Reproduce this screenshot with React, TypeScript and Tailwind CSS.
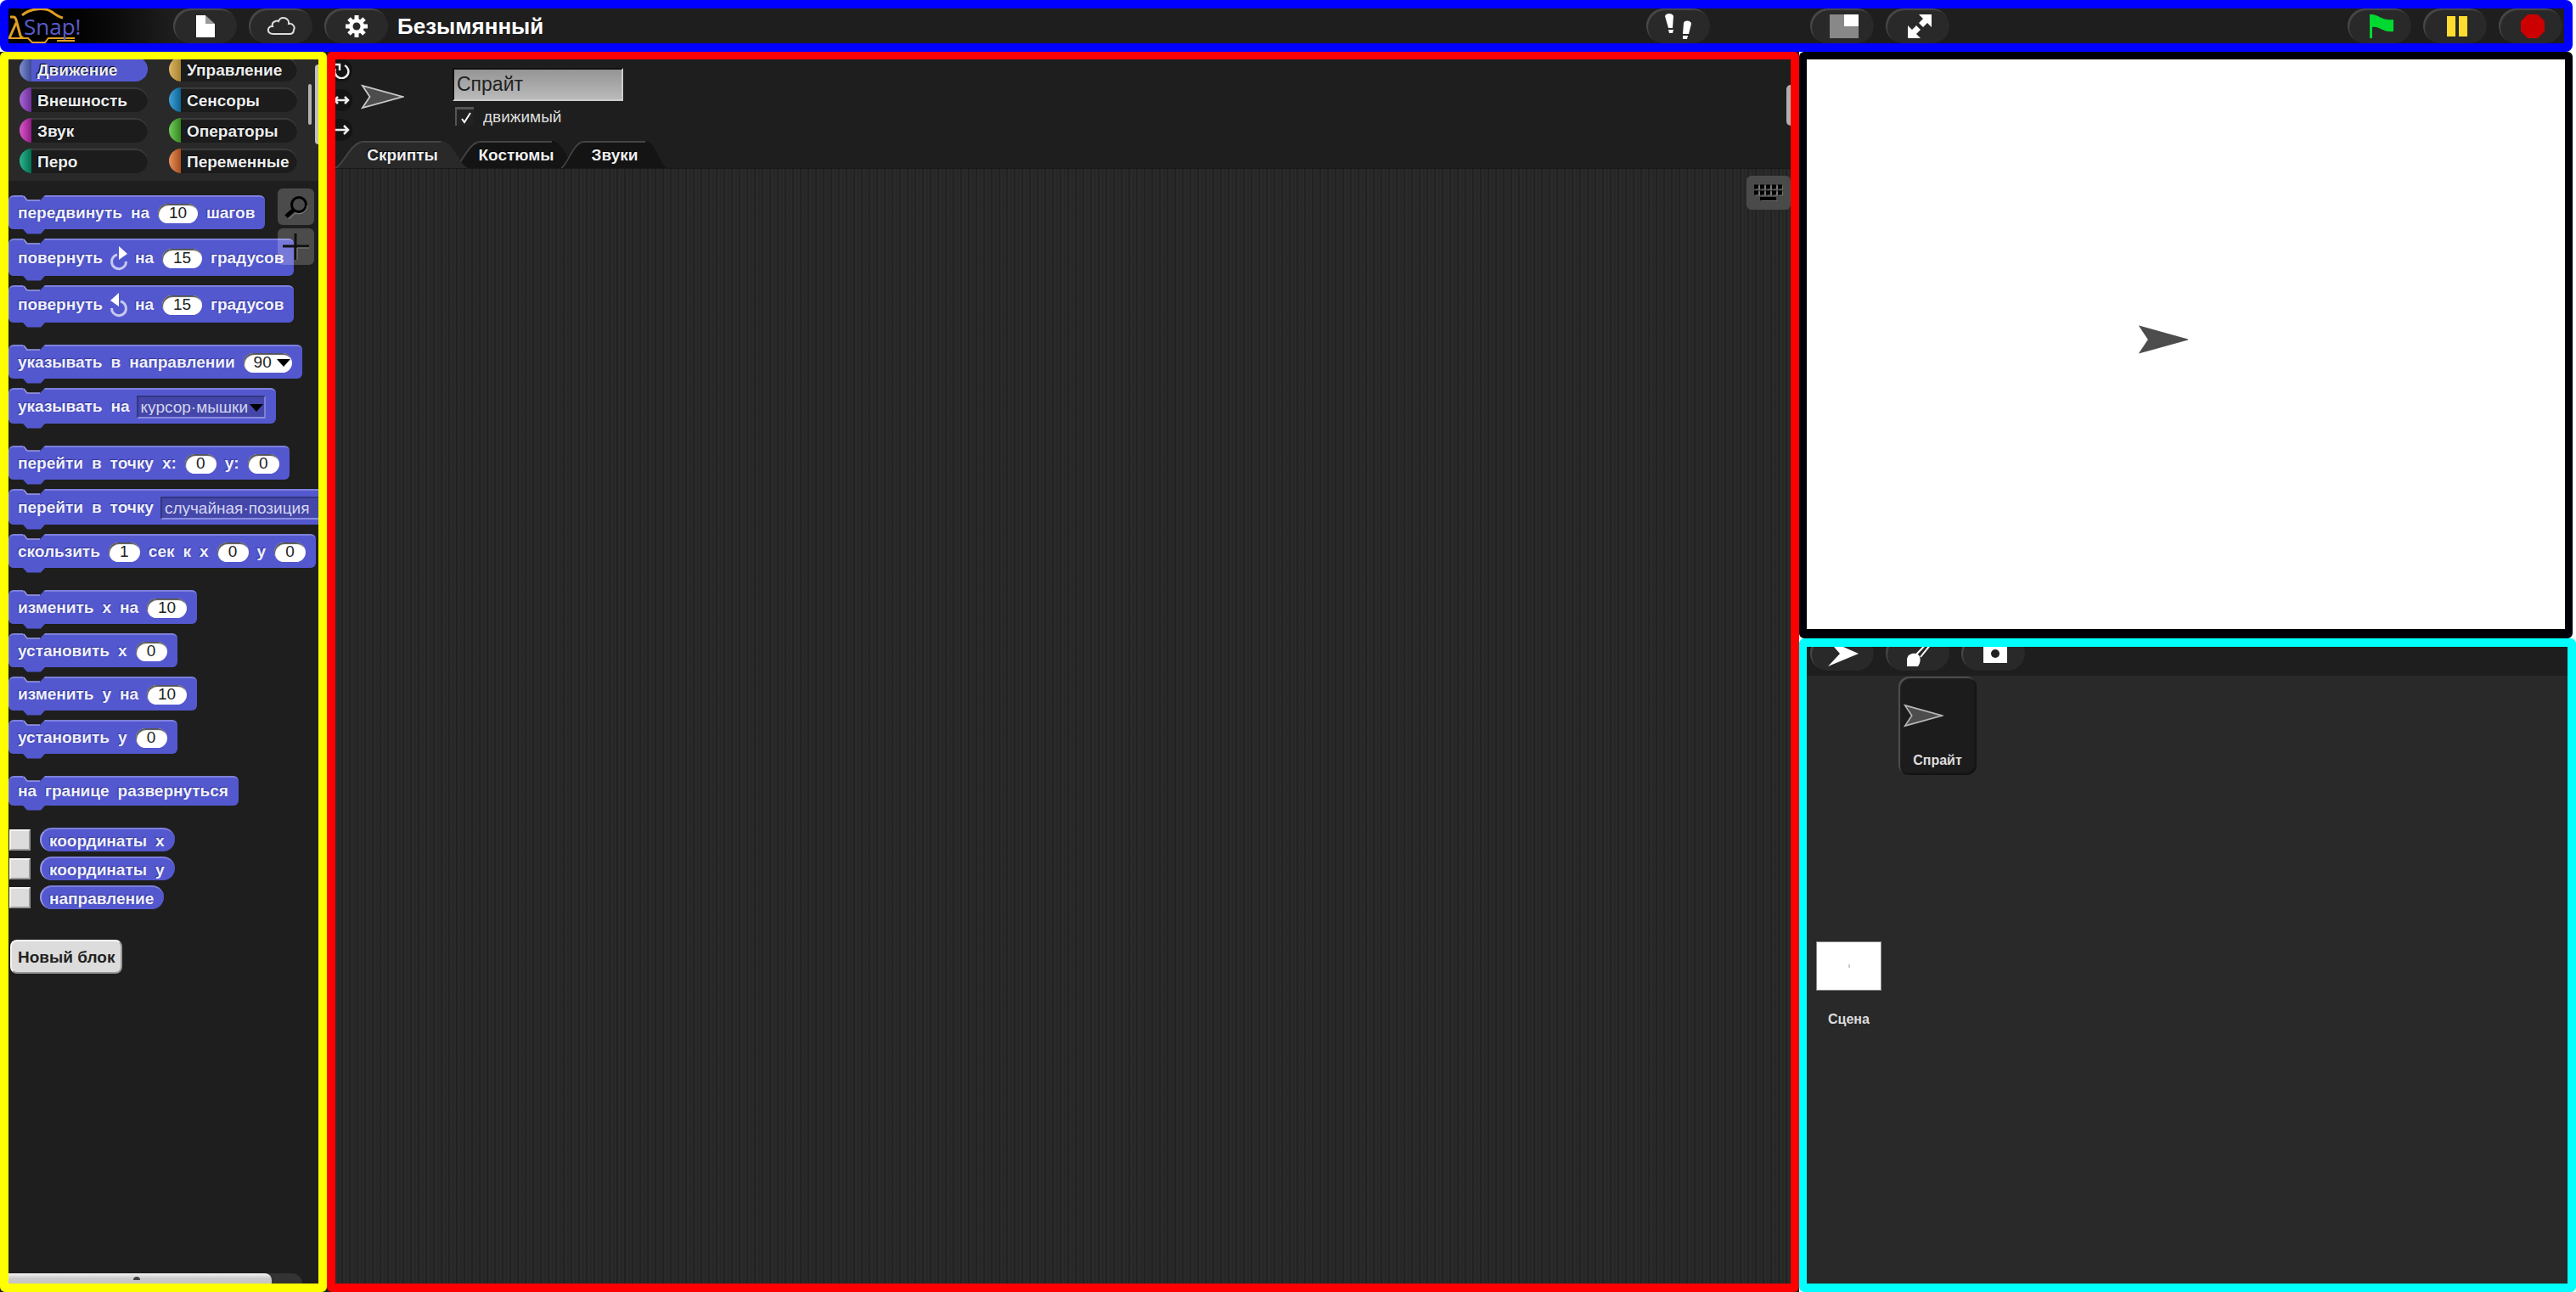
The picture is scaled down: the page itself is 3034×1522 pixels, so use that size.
import React from "react";

type Part =
  | { t: "w"; v: string }
  | { t: "n"; v: string }
  | { t: "nd"; v: string }
  | { t: "sel"; v: string; wide?: boolean }
  | { t: "cw" }
  | { t: "ccw" };

const w = (s: string): Part[] => s.split(" ").map((v) => ({ t: "w", v }));
const n = (v: string): Part => ({ t: "n", v });

const groups: { h: string; parts: Part[] }[][] = [
  [
    { h: "h-10", parts: [...w("передвинуть на"), n("10"), ...w("шагов")] },
    { h: "h-11", parts: [...w("повернуть"), { t: "cw" }, ...w("на"), n("15"), ...w("градусов")] },
    { h: "h-11", parts: [...w("повернуть"), { t: "ccw" }, ...w("на"), n("15"), ...w("градусов")] },
  ],
  [
    { h: "h-10", parts: [...w("указывать в направлении"), { t: "nd", v: "90" }] },
    { h: "h-[42px]", parts: [...w("указывать на"), { t: "sel", v: "курсор·мышки" }] },
  ],
  [
    { h: "h-10", parts: [...w("перейти в точку x:"), n("0"), ...w("y:"), n("0")] },
    { h: "h-[42px]", parts: [...w("перейти в точку"), { t: "sel", v: "случайная·позиция", wide: true }] },
    { h: "h-10", parts: [...w("скользить"), n("1"), ...w("сек к x"), n("0"), ...w("y"), n("0")] },
  ],
  [
    { h: "h-10", parts: [...w("изменить x на"), n("10")] },
    { h: "h-10", parts: [...w("установить x"), n("0")] },
    { h: "h-10", parts: [...w("изменить y на"), n("10")] },
    { h: "h-10", parts: [...w("установить y"), n("0")] },
  ],
  [{ h: "h-[35px]", parts: w("на границе развернуться") }],
];

const categories = [
  { name: "Движение", tab: "from-[#7f8fce] to-[#3d4a94]", active: true },
  { name: "Управление", tab: "from-[#dcb566] to-[#a8842f]" },
  { name: "Внешность", tab: "from-[#a866d6] to-[#6d2e99]" },
  { name: "Сенсоры", tab: "from-[#3fa3d8] to-[#0a6594]" },
  { name: "Звук", tab: "from-[#dd58cc] to-[#8f1a85]" },
  { name: "Операторы", tab: "from-[#72cc5c] to-[#34881f]" },
  { name: "Перо", tab: "from-[#2bb791] to-[#007050]" },
  { name: "Переменные", tab: "from-[#e8925c] to-[#a84f1c]" },
];

function TurnIcon({ flip }: { flip?: boolean }) {
  return (
    <svg viewBox="0 0 22 30" className={flip ? "-mx-0.5 h-[30px] w-[22px] shrink-0 -scale-x-100" : "-mx-0.5 h-[30px] w-[22px] shrink-0"} aria-hidden="true">
      <path d="M9 11A8.500 8.500 0 1 0 19.500 19" fill="none" stroke="#c8c9f0" strokeWidth="3" />
      <path d="M11 1L21 10L11 17Z" fill="#fff" />
    </svg>
  );
}

function NumberSlot({ value, label }: { value: string; label: string }) {
  return (
    <input
      aria-label={label}
      defaultValue={value}
      className={
        (value.length > 1 ? "w-[47px]" : "w-[37px]") +
        " h-[23px] shrink-0 rounded-full bg-white p-0 text-center text-[19px] leading-none font-normal text-[#222] shadow-[inset_1px_2px_1px_#555] [text-shadow:none]"
      }
    />
  );
}

function BlockPart({ part, label }: { part: Part; label: string }) {
  switch (part.t) {
    case "w":
      return <span>{part.v}</span>;
    case "n":
      return <NumberSlot value={part.v} label={label} />;
    case "nd":
      return (
        <span className="flex h-[23px] w-[57px] shrink-0 items-center rounded-full bg-white pl-3 shadow-[inset_1px_2px_1px_#555]">
          <input aria-label={label} defaultValue={part.v} className="w-6 bg-transparent p-0 text-[19px] leading-none font-normal text-[#222] [text-shadow:none]" />
          <button aria-label="Выбрать направление" className="ml-[3px]">
            <svg viewBox="0 0 16 9" className="h-[9px] w-4">
              <path d="M0 0H16L8 9Z" fill="#000" />
            </svg>
          </button>
        </span>
      );
    case "sel":
      return (
        <span className="relative -ml-0.5 shrink-0">
          <select
            aria-label={label}
            className={
              (part.wide ? "w-[206px]" : "w-[152px]") +
              " block h-[27px] appearance-none border-2 border-t-[#33367f] border-r-[#7b7edc] border-b-[#8a8de0] border-l-[#33367f] bg-[#4447a8] px-[3px] text-[19px] leading-none font-normal text-[#d4d5f2]"
            }
          >
            <option>{part.v}</option>
          </select>
          <svg viewBox="0 0 16 9" className="pointer-events-none absolute top-[10px] right-[3px] h-[9px] w-4" aria-hidden="true">
            <path d="M0 0H16L8 9Z" fill="#000" />
          </svg>
        </span>
      );
    default:
      return <TurnIcon flip={part.t === "ccw"} />;
  }
}

function Block({ h, parts }: { h: string; parts: Part[] }) {
  const label = parts.map((p) => ("v" in p ? p.v : "")).join(" ");
  return (
    <div
      className={
        h +
        " relative flex w-max items-center gap-[10px] rounded-md border-t-2 border-l border-t-[#7d80dc] border-l-[#6d70d6] bg-[#5458cf] pr-3 pl-[10px] text-[19px] font-bold text-[#f0f0fc] [text-shadow:-1px_-1px_1px_#34378a]"
      }
    >
      <svg viewBox="0 0 26 7" className="absolute -top-0.5 left-4 h-[7px] w-[26px]" aria-hidden="true">
        <path d="M0 0H26L20 6H5Z" fill="#1e1e1e" />
        <path d="M1 1L5 6H20" fill="none" stroke="#9a9ce4" strokeWidth="1.5" />
      </svg>
      <svg viewBox="0 0 26 6" className="absolute top-full left-4 h-[6px] w-[26px]" aria-hidden="true">
        <path d="M0 0H26L21 5.500H5Z" fill="#5458cf" />
      </svg>
      {parts.map((p, i) => (
        <BlockPart key={i} part={p} label={label} />
      ))}
    </div>
  );
}

function Pill({ label, children }: { label: string; children: React.ReactNode }) {
  return (
    <button
      aria-label={label}
      className="flex h-[41px] w-[75px] shrink-0 items-center justify-center rounded-full bg-[#292929] shadow-[inset_2px_2px_1px_#484848]"
    >
      {children}
    </button>
  );
}

function Dart({ className, fill, stroke }: { className: string; fill: string; stroke?: string }) {
  return (
    <svg viewBox="0 0 58 34" className={className} aria-hidden="true">
      <path d="M2 2L56 17L2 32L12 17Z" fill={fill} stroke={stroke ?? fill} strokeWidth="2" />
    </svg>
  );
}

function TopBar() {
  return (
    <header className="mr-1 flex shrink-0 items-center overflow-hidden rounded-lg border-[10px] border-[#0000ff] bg-[#1e1e1e] pr-0.5">
      <div className="relative flex h-[41px] w-[194px] shrink-0 items-center bg-linear-to-r from-black to-[#1e1e1e]">
        <svg viewBox="0 0 90 41" className="absolute inset-0 h-[41px] w-[90px]" aria-hidden="true">
          <g fill="none" stroke="#e0a020" strokeWidth="3">
            <path d="M16 8C26-1 44-1 51 4S59 10 64 11" />
            <path d="M0 35H23L28 40H43L47 35H78M57 38H78" strokeWidth="2" />
          </g>
          <path d="M2 10H6C9 10 9 14 10 17L14 32C15 34 16 34 17 33M9 17L1 35" fill="none" stroke="#e0a020" strokeWidth="3" />
        </svg>
        <span className="relative pl-[18px] font-['Open_Sans',sans-serif] text-[26px] leading-none text-[#5a5ccc]">Snap!</span>
      </div>
      <nav className="flex gap-[14px]">
        <Pill label="Файл">
          <svg viewBox="0 0 24 28" className="h-7 w-6">
            <path d="M1 1H12V11H23V27H1Z" fill="#fff" />
            <path d="M12 1L23 11H12Z" fill="#999" />
          </svg>
        </Pill>
        <Pill label="Облако">
          <svg viewBox="0 0 34 24" className="h-6 w-[34px]">
            <path d="M8 21C-1 21 1 11 7 12C5 6 13 5 14 6C17-1 27 2 26 9C31 8 34 13 32 16C32 19 30 21 27 21Z" fill="none" stroke="#ddd" strokeWidth="2" />
          </svg>
        </Pill>
        <Pill label="Настройки">
          <svg viewBox="0 0 28 28" className="h-7 w-7">
            <g stroke="#fff" strokeWidth="5">
              <path d="M14 1V27M1 14H27M5 5L23 23M23 5L5 23" />
            </g>
            <circle cx="14" cy="14" r="9" fill="#fff" />
            <circle cx="14" cy="14" r="4.500" fill="#292929" />
          </svg>
        </Pill>
      </nav>
      <h1 className="ml-[11px] flex-1 text-[26px] leading-none font-bold text-white">Безымянный</h1>
      <Pill label="Пошагово">
        <svg viewBox="0 0 32 32" className="h-8 w-8" fill="#fff">
          <path d="M0 4C1 0 9 0 10 4L9 18H4ZM4 20H10L9 24H5Z" />
          <path d="M22 12C23 8 31 9 31 13L28 25H21ZM21 27H27L26 31H21Z" />
        </svg>
      </Pill>
      <div className="ml-[118px] flex w-[886px] shrink-0 gap-[14px]">
        <Pill label="Размер сцены">
          <svg viewBox="0 0 34 28" className="ml-1 h-7 w-[34px]">
            <path d="M0 0H34V28H0Z" fill="#888" />
            <path d="M17 0H34V14H17Z" fill="#fff" />
          </svg>
        </Pill>
        <Pill label="Полный экран">
          <svg viewBox="0 0 28 28" className="ml-1 h-7 w-7">
            <path d="M13 0H28V15L23 10L18 15L13 10L18 5ZM0 13L5 18L10 13L15 18L10 23L15 28H0Z" fill="#fff" />
          </svg>
        </Pill>
        <div className="ml-auto flex gap-[14px]">
          <Pill label="Старт">
            <svg viewBox="0 0 28 28" className="ml-1 h-7 w-7">
              <path d="M0 0C10-1 14 8 28 6V20C16 22 11 13 3 15V28H0Z" fill="#00d930" />
            </svg>
          </Pill>
          <Pill label="Пауза">
            <svg viewBox="0 0 24 24" className="ml-1 h-6 w-6">
              <path d="M0 0H10V24H0ZM14 0H24V24H14Z" fill="#ffdc2f" />
            </svg>
          </Pill>
          <Pill label="Стоп">
            <svg viewBox="0 0 28 28" className="ml-1 h-7 w-7">
              <path d="M8 0H20L28 8V20L20 28H8L0 20V8Z" fill="#cc0000" />
            </svg>
          </Pill>
        </div>
      </div>
    </header>
  );
}

function Palette() {
  return (
    <aside className="relative flex flex-col overflow-hidden rounded-md border-[10px] border-t-[9px] border-[#ffff00] bg-[#1e1e1e]">
      <div className="relative h-[143px] shrink-0 overflow-hidden bg-[#292929]">
        <div className="-mt-[3px] ml-[13px] grid w-[327px] grid-cols-2 gap-x-[25px] gap-y-[7px]">
          {categories.map((c) => (
            <button
              key={c.name}
              className={
                (c.active ? "bg-[#5458cf]" : "bg-[#1c1c1c] shadow-[inset_0_2px_1px_#3c3c3c]") +
                " flex h-[29px] items-center overflow-hidden rounded-full text-[19px] leading-none font-bold whitespace-nowrap text-[#eee] [text-shadow:-1px_-1px_1px_#000]"
              }
            >
              <span className={c.tab + " mr-[7px] h-full w-[14px] shrink-0 bg-linear-to-r"} />
              <span className="pt-0.5">{c.name}</span>
            </button>
          ))}
        </div>
        <div className="absolute top-[29px] right-[8px] h-12 w-1 rounded-full bg-[#b0b0b0]" />
        <div className="absolute top-[6px] right-0 h-[94px] w-1 rounded-l-full bg-[#c0c0c0]" />
      </div>
      <div className="relative flex-1 pt-[17px]">
        <div className="flex flex-col gap-[26px]">
          {groups.map((g, i) => (
            <div key={i} className="flex flex-col gap-[11px]">
              {g.map((b, j) => (
                <Block key={j} h={b.h} parts={b.parts} />
              ))}
            </div>
          ))}
          <div className="flex flex-col gap-[6px]">
            {["координаты x", "координаты y", "направление"].map((r) => (
              <label key={r} className="flex items-center gap-[11px] pl-px">
                <input
                  type="checkbox"
                  className="h-[25px] w-[25px] appearance-none border-2 border-t-[#f4f4f4] border-r-[#999] border-b-[#999] border-l-[#f4f4f4] bg-[#dcdcdc]"
                />
                <span className="flex h-7 items-center gap-[10px] rounded-full border-t-2 border-l-2 border-t-[#7d80dc] border-l-[#9a9ce4] bg-[#5458cf] pr-3 pl-[9px] text-[19px] leading-none font-bold text-[#f0f0fc] [text-shadow:-1px_-1px_1px_#34378a]">
                  {r.split(" ").map((x) => (
                    <span key={x}>{x}</span>
                  ))}
                </span>
              </label>
            ))}
          </div>
        </div>
        <button className="mt-9 ml-0.5 h-10 rounded-lg border-2 border-t-[#f4f4f4] border-r-[#999] border-b-[#999] border-l-[#f4f4f4] bg-[#dcdcdc] px-[7px] text-[19px] leading-none font-bold text-[#222]">
          Новый блок
        </button>
        <div className="absolute top-[9px] right-[5px] flex flex-col gap-1">
          <button aria-label="Найти блок" className="flex h-[43px] w-[43px] items-center justify-center rounded-md bg-white/20">
            <svg viewBox="0 0 28 28" className="h-7 w-7" fill="none">
              <circle cx="17" cy="11" r="8.500" stroke="#000" strokeWidth="3" />
              <path d="M11 17L2 25" stroke="#000" strokeWidth="5" />
              <path d="M27 12A10 10 0 0 1 13 21L5 28" stroke="#888" />
            </svg>
          </button>
          <button aria-label="Создать блок" className="flex h-[43px] w-[43px] items-center justify-center rounded-md bg-white/20">
            <svg viewBox="0 0 32 32" className="h-8 w-8" stroke="#111" strokeWidth="3">
              <path d="M15 0V31M0 15H31" />
              <path d="M17 17V31M17 17H31" stroke="#888" strokeWidth="1" />
            </svg>
          </button>
        </div>
      </div>
      <div className="h-3 w-[346px] shrink-0 rounded-tr-xl bg-[#333]">
        <div className="flex h-3 w-[310px] items-end justify-center rounded-tr-lg bg-linear-to-b from-[#f4f4f4] via-[#ccc] to-[#c4c4c4] pr-2 pb-1">
          <span className="h-1 w-2 rounded-t-full bg-[#444]" />
        </div>
      </div>
    </aside>
  );
}

function Tab({ name, size, active }: { name: string; size: string; active?: boolean }) {
  return (
    <button
      className={
        size +
        " relative flex h-8 items-center justify-center text-[19px] leading-none font-bold text-[#eee] [text-shadow:-1px_-1px_1px_#000]" +
        (active ? " z-10" : "")
      }
    >
      <svg viewBox="0 0 160 32" preserveAspectRatio="none" className="absolute inset-0 h-full w-full" aria-hidden="true">
        <path d="M0 32C10 28 18 0 34 0H126C142 0 148 32 160 32Z" fill={active ? "#292929" : "#141414"} />
        <path d="M0 32C10 28 18 1 34 1H126" fill="none" stroke="#444" strokeWidth="2" />
      </svg>
      <span className="relative">{name}</span>
    </button>
  );
}

function RotationButton({ label, d }: { label: string; d: string }) {
  return (
    <button aria-label={label} className="-ml-[7px] flex h-[27px] w-[27px] items-center justify-center rounded-full bg-[#141414]">
      <svg viewBox="0 0 20 20" className="h-5 w-5" fill="none" stroke="#eee" strokeWidth="2.500">
        <path d={d} />
      </svg>
    </button>
  );
}

function Editor() {
  return (
    <main className="relative flex flex-col overflow-hidden rounded-md border-[10px] border-t-[9px] border-[#ff0000] bg-[#1e1e1e]">
      <div className="flex h-24 shrink-0">
        <div className="flex w-[30px] shrink-0 flex-col gap-[9px]">
          <RotationButton label="Вращать" d="M14 4A8 8 0 1 1 3 8M1 3H8V10" />
          <RotationButton label="Отражать" d="M2 10H18M6 6L2 10L6 14M14 6L18 10L14 14" />
          <RotationButton label="Не вращать" d="M0 10H18M13 5L18 10L13 15" />
        </div>
        <Dart className="mt-[29px] h-[30px] w-[51px]" fill="#4d4d4d" stroke="#c8c8c8" />
        <div className="ml-[57px] pt-[10px]">
          <input
            aria-label="Имя спрайта"
            defaultValue="Спрайт"
            className="block h-[39px] w-[201px] border-2 border-t-[#111] border-r-[#ccc] border-b-[#ccc] border-l-[#111] bg-linear-to-b from-[#959595] to-[#bababa] px-[3px] text-[23px] leading-none text-[#222]"
          />
          <label className="mt-[7px] ml-[3px] flex items-center gap-[11px] text-[19px] leading-none text-[#ddd]">
            <span className="relative h-[22px] w-[22px]">
              <input type="checkbox" defaultChecked className="block h-[22px] w-[22px] appearance-none border-t-[3px] border-l-2 border-[#555] bg-[#222]" />
              <svg viewBox="0 0 22 22" className="pointer-events-none absolute inset-0 h-[22px] w-[22px]" aria-hidden="true">
                <path d="M8 14L11 18L18 7" fill="none" stroke="#fff" strokeWidth="2" />
              </svg>
            </span>
            движимый
          </label>
        </div>
      </div>
      <div className="flex shrink-0 border-b border-[#181818]">
        <Tab name="Скрипты" size="w-[158px]" active />
        <Tab name="Костюмы" size="-ml-[18px] w-[146px]" />
        <Tab name="Звуки" size="-ml-5 w-[126px]" />
      </div>
      <div className="relative flex-1 bg-[repeating-linear-gradient(90deg,#2a2a2a_0px,#2a2a2a_3px,#232323_4px,#2a2a2a_5px,#2a2a2a_7px,#191919_8px,#2a2a2a_9px)]">
        <button aria-label="Ввод с клавиатуры" className="absolute top-[8px] right-0 flex h-10 w-[52px] items-center justify-center rounded-md bg-[#4a4a4a]">
          <svg viewBox="0 0 34 20" className="h-5 w-[34px]">
            <path d="M1 3H34M1 10H34" stroke="#777" strokeWidth="5" strokeDasharray="5 2" transform="translate(1 1)" />
            <path d="M0 3H34M0 10H34" stroke="#000" strokeWidth="5" strokeDasharray="5 2" />
            <path d="M7 17H26" stroke="#000" strokeWidth="4" />
            <path d="M9 20H27" stroke="#888" strokeWidth="1" />
          </svg>
        </button>
      </div>
      <div className="absolute top-[30px] right-0 h-12 w-[5px] rounded-l-full bg-[#b0b0b0]" />
    </main>
  );
}

function Corral() {
  return (
    <section className="flex flex-1 flex-col overflow-hidden rounded-md border-[10px] border-l-[9px] border-[#00ffff] bg-[#292929]">
      <div className="h-[34px] shrink-0 bg-[#1e1e1e] pl-1">
        <div className="-mt-[13px] flex gap-[14px]">
          <Pill label="Новый спрайт">
            <svg viewBox="0 0 36 32" className="ml-0.5 h-8 w-9">
              <path d="M0 1L36 17L0 32L14 17Z" fill="#fff" />
            </svg>
          </Pill>
          <Pill label="Нарисовать">
            <svg viewBox="0 0 34 34" className="mb-0.5 h-[34px] w-[34px]">
              <path d="M15 20L31 3M20 23L32 8" stroke="#fff" strokeWidth="2" />
              <path d="M4 34V26C4 19 13 17 17 20S20 30 17 34Z" fill="#fff" />
            </svg>
          </Pill>
          <Pill label="Камера">
            <svg viewBox="0 0 28 24" className="ml-1 h-6 w-7">
              <path d="M0 4H7L9 0H19L21 4H28V24H0Z" fill="#fff" />
              <circle cx="14" cy="13" r="5" fill="#222" />
            </svg>
          </Pill>
        </div>
      </div>
      <div className="flex flex-1 pt-px">
        <div className="w-[108px] shrink-0 pt-[312px] pl-[11px]">
          <button className="flex w-[77px] flex-col items-center">
            <span className="flex h-[58px] w-[77px] items-center justify-center border border-[#888] bg-white">
              <span className="h-1 w-0.5 bg-[#ccc]" />
            </span>
            <span className="mt-6 text-base leading-5 font-bold text-[#ddd]">Сцена</span>
          </button>
        </div>
        <button className="flex h-[116px] w-[92px] flex-col rounded-xl bg-[#1c1c1c] shadow-[inset_2px_2px_1px_#505050,inset_-2px_-2px_2px_#141414]">
          <Dart className="mt-8 ml-[6px] h-[28px] w-[47px]" fill="#4d4d4d" stroke="#b8b8b8" />
          <span className="mt-[29px] self-center text-base leading-5 font-bold text-[#ddd]">Спрайт</span>
        </button>
      </div>
    </section>
  );
}

export default function App() {
  return (
    <div className="flex min-h-screen flex-col bg-white font-['Liberation_Sans',Arial,sans-serif]">
      <TopBar />
      <div className="grid flex-1 grid-cols-[385px_minmax(0,1fr)_915px] bg-[#1e1e1e]">
        <Palette />
        <Editor />
        <div className="flex flex-col bg-white">
          <div className="mr-1 flex aspect-[910/690] items-center justify-center rounded-md border-[9px] border-b-[11px] border-[#000008] bg-white">
            <Dart className="mr-[54px] mb-[11px] h-[34px] w-[58px]" fill="#4d4d4d" />
          </div>
          <Corral />
        </div>
      </div>
    </div>
  );
}
